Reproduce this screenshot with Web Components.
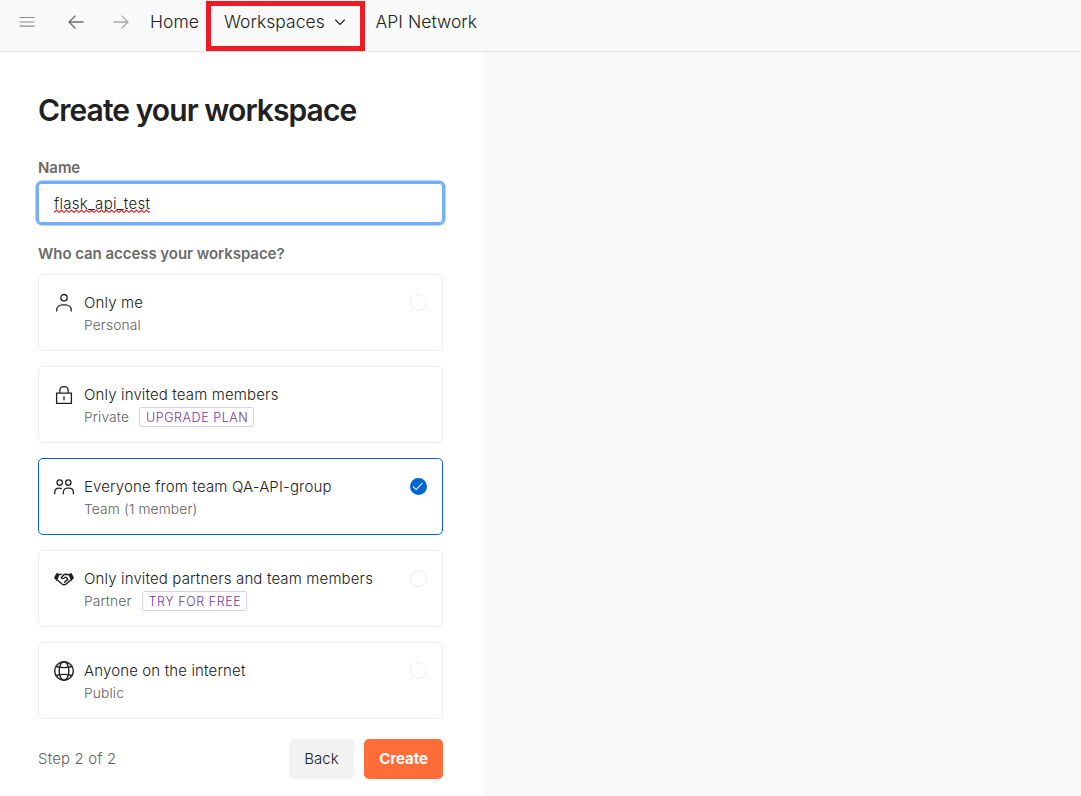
<!DOCTYPE html>
<html lang="en">
<head>
<meta charset="utf-8">
<title>Create your workspace</title>
<style>
html,body{margin:0;height:100%;overflow:hidden;background:#f9f9f9}
body{font-family:Inter,"Liberation Sans",sans-serif;color:#212121}
</style>
</head>
<body>
<workspace-app></workspace-app>
<script>
const make = (name, html, init) => {
  const t = document.createElement('template');
  t.innerHTML = html;
  customElements.define(name, class extends HTMLElement {
    connectedCallback() {
      if (this.shadowRoot) return;
      this.attachShadow({mode: 'open'}).append(t.content.cloneNode(true));
      if (init) init(this);
    }
  });
};

const icons = {
  menu: '<g stroke="#8b8b8b" stroke-width="1.2"><path d="M2.5 5.5h15M2.5 10h15M2.5 14.2h15"/></g>',
  back: '<path stroke="#6b6b6b" d="M17.5 10H3M9.5 3.6 3 10l6.500 6.500"/>',
  forward: '<path stroke="#a6a6a6" d="M2.500 10H17M10.500 3.600 17 10l-6.500 6.500"/>',
  chevron: '<path stroke="#212121" stroke-width="1.35" d="M4.800 7.500 10 12.600l5.200-5.100"/>',
  person: '<circle cx="10" cy="4.700" r="3.200"/><path d="M2.700 18.600v-1.300c0-3.600 2.800-5.500 5.700-5.500h3.200c2.900 0 5.700 1.900 5.700 5.500v1.300"/>',
  lock: '<path d="M2.600 8.100h14.800v10.300H2.600zM5.800 8V5.700C5.800 3.200 7.700 1.600 10 1.600s4.200 1.600 4.200 4.100V8M10 11.200v4"/>',
  people: '<circle cx="5.700" cy="5.600" r="2.700"/><circle cx="14.300" cy="5.600" r="2.700"/><path d="M.7 17.200v-1.500c0-3 2-4.600 4.400-4.600 1 0 2 .1 2.700.5M9.300 17.200v-1.400c0-3 2.100-4.700 4.200-4.700h1.700c2.200 0 4.200 1.700 4.200 4.700v1.400"/>',
  partner: '<path fill="#212121" stroke="none" d="M0 8.800 2.500 3.900l3.300 1-2.900 7.300zM20 8.800l-2.500-4.900-3.300 1 2.900 7.300z"/><path stroke-width="1.400" d="m4.800 5.600 3-.4M11.500 5.200l3.400.5M12.500 5.300 10 5.500 7.400 8.500c.3 1.500 2.300 1.400 3.500-.1l1.600 0 1.300 2.200-2.200 1.500-1.300 1.600M3.400 11l4.300 3.700c1.400 1.100 3 1.300 4.300.4l4.700-4.100"/>',
  globe: '<g stroke-width="1.400"><circle cx="10" cy="10" r="9.300"/><ellipse cx="10" cy="10" rx="4.800" ry="9.300"/><path d="M1.900 5.500c4.500 1.200 11.700 1.200 16.200 0M1.900 14.500c4.500-1.200 11.700-1.200 16.200 0"/></g>',
  check: '<circle cx="10" cy="10" r="10" fill="#0265d2" stroke="none"/><path stroke="#c7ddf5" stroke-width="1.500" d="m3.500 9.900 3.700 3.600 7.400-7.600"/>'
};
make('ui-icon', `<style>:host{display:block;width:20px;height:20px;flex:none}svg{display:block;width:100%;height:100%;overflow:visible}</style><svg viewBox="0 0 20 20" fill="none" stroke="#212121" stroke-width="1.300"></svg>`,
  el => { el.shadowRoot.querySelector('svg').innerHTML = icons[el.getAttribute('name')] || ''; });

make('nav-item', `<style>
:host{display:flex;align-items:center;position:relative;height:43px;font-size:17.500px;font-weight:300;letter-spacing:.03px;white-space:nowrap}
.mark{display:none}
:host([marked]) .mark{display:block;position:absolute;box-sizing:border-box;left:-18px;top:1px;width:159px;height:50px;border:5px solid #ed1c24}
</style><slot></slot><div class="mark"></div>`);

make('top-bar', `<style>
:host{display:flex;box-sizing:border-box;height:52px;background:#f9f9f9;border-bottom:1px solid #e3e3e3;padding-left:17px;align-items:flex-start}
.tools{display:flex;gap:29px;align-items:center;height:43px;width:133px}
.tools ui-icon:nth-child(n+2){margin-right:-4.500px}
.home{width:74px}.ws{width:151.500px}
.ws ui-icon{width:18px;height:18px;margin-left:6px}
</style><div class="tools"><ui-icon name="menu"></ui-icon><ui-icon name="back"></ui-icon><ui-icon name="forward"></ui-icon></div>
<nav-item class="home">Home</nav-item><nav-item class="ws" marked>Workspaces<ui-icon name="chevron"></ui-icon></nav-item><nav-item>API Network</nav-item>`);

make('field-label', `<style>:host{display:block;font-size:15px;line-height:20px;font-weight:600;color:#6b6b6b;letter-spacing:-.05px}</style><slot></slot>`);

make('text-field', `<style>
:host{display:flex;align-items:center;box-sizing:border-box;height:40px;margin:5px 0 0;width:405px;padding:1px 0 0 16px;border-radius:4px;background:#fff;box-shadow:inset 0 0 0 1px #74aef6,0 0 0 2.500px #74aef6;font-size:15px;font-weight:300;letter-spacing:.3px}
span{position:relative;line-height:20px}
svg{position:absolute;left:0;top:15.500px;width:100%;height:5px}
</style><span><slot></slot><svg><defs><pattern id="w" width="5" height="5" patternUnits="userSpaceOnUse"><path d="M0 3.500 2.500 1 5 3.500" fill="none" stroke="#ef2020" stroke-width="1.100"/></pattern></defs><rect width="100%" height="5" fill="url(#w)"/></svg></span>`);

make('plan-tag', `<style>:host{display:block;box-sizing:border-box;height:20px;border:1px solid #dccff5;border-radius:2px;padding:0 5px 0 6px;font-size:12.500px;line-height:19px;font-weight:300;letter-spacing:.58px;color:#7439a8;white-space:nowrap}</style><slot></slot>`);

make('access-option', `<style>
:host{display:flex;box-sizing:border-box;height:77px;border:1px solid #ededed;border-radius:5px;background:#fff;padding:18px 15px 0 15px}
:host([selected]){border-color:#0265d2}
.text{margin-left:10px;flex:1}
.title{font-size:15px;line-height:20px;font-weight:300;letter-spacing:.14px;white-space:nowrap}
.sub{display:flex;gap:10px;align-items:center;height:20px;margin-top:2px;font-size:13.750px;color:#606060;font-weight:300;letter-spacing:.15px}
.radio{box-sizing:border-box;width:17px;height:17px;border:1px solid #ededed;border-radius:50%;margin-top:1px}
ui-icon.on{display:none;width:17px;height:17px;margin-top:1px}
:host([selected]) .radio,:host([locked]) .radio{display:none}:host([selected]) ui-icon.on{display:block}
</style><ui-icon class="kind"></ui-icon><div class="text"><div class="title"><slot></slot></div><div class="sub"><slot name="sub"></slot><slot name="tag"></slot></div></div><div class="radio"></div><ui-icon class="on" name="check"></ui-icon>`);

make('push-button', `<style>:host{display:flex;align-items:center;justify-content:center;box-sizing:border-box;padding-bottom:1px;width:65px;height:40px;border-radius:5px;background:#f2f2f2;font-size:15px;font-weight:300;letter-spacing:.1px}
:host([primary]){width:79px;background:#ff6c37;color:#fff;font-weight:700;letter-spacing:-.04px}</style><slot></slot>`);

make('workspace-form', `<style>
:host{display:block;box-sizing:border-box;width:483px;height:744px;background:#fff;padding:38px 40px 0 38px}
h1{margin:0;font-size:30px;line-height:40px;font-weight:600;letter-spacing:-.93px;white-space:nowrap}
.name{margin-top:28px}.who{margin-top:21px}
.list{display:grid;gap:15px;margin-top:10px}
footer{display:flex;align-items:center;gap:10px;margin-top:20px;font-size:15px;font-weight:300}
.step{flex:1;color:#606060;letter-spacing:.16px;padding-bottom:2px}
</style><h1>Create your workspace</h1>
<field-label class="name">Name</field-label><text-field>flask_api_test</text-field>
<field-label class="who">Who can access your workspace?</field-label>
<div class="list">
<access-option icon="person">Only me<span slot="sub">Personal</span></access-option>
<access-option icon="lock" locked>Only invited team members<span slot="sub">Private</span><plan-tag slot="tag">UPGRADE PLAN</plan-tag></access-option>
<access-option icon="people" selected>Everyone from team QA-API-group<span slot="sub">Team (1 member)</span></access-option>
<access-option icon="partner">Only invited partners and team members<span slot="sub">Partner</span><plan-tag slot="tag">TRY FOR FREE</plan-tag></access-option>
<access-option icon="globe">Anyone on the internet<span slot="sub">Public</span></access-option>
</div>
<footer><span class="step">Step 2 of 2</span><push-button>Back</push-button><push-button primary>Create</push-button></footer>`,
  el => el.shadowRoot.querySelectorAll('access-option').forEach(o => {
    const k = o.shadowRoot.querySelector('.kind');
    k.shadowRoot.querySelector('svg').innerHTML = icons[o.getAttribute('icon')];
  }));

make('workspace-app', `<style>:host{display:block}</style><top-bar></top-bar><workspace-form></workspace-form>`);
</script>
</body>
</html>
